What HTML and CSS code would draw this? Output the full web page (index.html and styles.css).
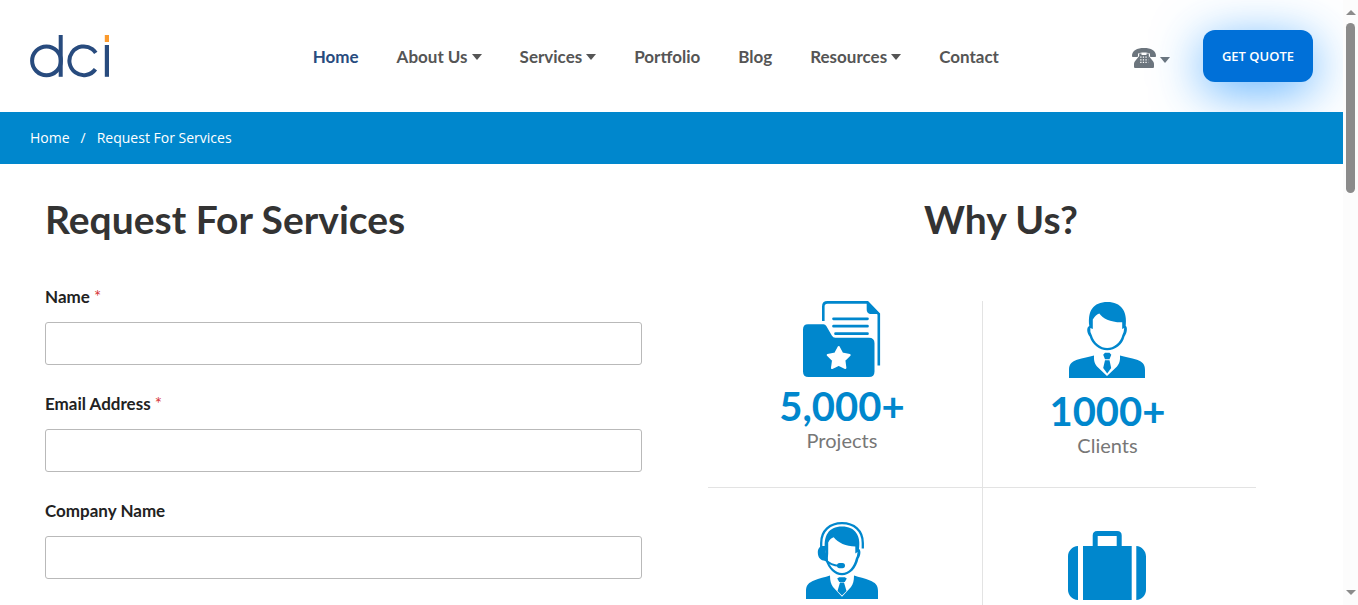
FILE: index.html
```html
<!DOCTYPE html>
<html lang="en">
<head>
<meta charset="utf-8">
<meta name="viewport" content="width=device-width, initial-scale=1">
<title>Request For Services</title>
<link rel="stylesheet" href="styles.css">
</head>
<body>
<div class="window">
<div class="page">
  <header class="header">
    <a class="logo" href="#" aria-label="dci">
      <svg width="80" height="44" viewBox="0 0 80 44" fill="none" stroke="#284b7e" stroke-width="4">
        <circle cx="16.5" cy="26.8" r="14.4"/>
        <rect x="28.7" y="1" width="4" height="41.8" fill="#284b7e" stroke="none"/>
        <circle cx="53.8" cy="26.8" r="14.4" stroke-dasharray="72.5 18" transform="rotate(36 53.8 26.8)"/>
        <rect x="74.8" y="11" width="4.2" height="31.8" fill="#284b7e" stroke="none"/>
        <rect x="74.8" y="1" width="4.2" height="7" fill="#fb9a2d" stroke="none"/>
      </svg>
    </a>
    <nav class="nav">
      <a class="nav-link active" href="#">Home</a>
      <a class="nav-link" href="#">About Us<span class="caret"></span></a>
      <a class="nav-link" href="#">Services<span class="caret"></span></a>
      <a class="nav-link" href="#">Portfolio</a>
      <a class="nav-link" href="#">Blog</a>
      <a class="nav-link" href="#">Resources<span class="caret"></span></a>
      <a class="nav-link" href="#">Contact</a>
    </nav>
    <div class="actions">
      <button class="phone" type="button" aria-label="Phone numbers">
        <svg width="24" height="20" viewBox="0 0 24 20">
          <path fill="#6c757d" d="M0 8C0 2.500 5 0 12 0S24 2.500 24 8c0 .8-.5 1-1.200 1h-3.600c-.8 0-1.200-.4-1.200-1V5.500C15 4 9 4 6 5.500V8c0 .6-.4 1-1.200 1H1.200C.5 9 0 8.800 0 8Z"/>
          <path fill="#6c757d" d="M7.200 5.500h2.300V7h5V5.500h2.300V8l4.400 5.500c.6.800.8 1.500.8 2.500v2.500c0 1-.5 1.500-1.500 1.500h-17C2.500 20 2 19.500 2 18.500V16c0-1 .2-1.700.8-2.500L7.200 8Z"/>
          <path stroke="#fff" stroke-width="1.300" stroke-dasharray="1.300 1.300" d="M8.200 9.200h8M8.200 11.800h8M8.200 14.400h8" />
        </svg>
        <span class="caret"></span>
      </button>
      <a class="quote" href="#">GET QUOTE</a>
    </div>
  </header>

  <nav class="crumbs" aria-label="Breadcrumb">
    <a href="#">Home</a><span>/</span><span>Request For Services</span>
  </nav>

  <main class="main">
    <section>
      <h1 class="title">Request For Services</h1>
      <form class="form">
        <div class="field">
          <label for="name">Name <span class="required">*</span></label>
          <input id="name" type="text">
        </div>
        <div class="field">
          <label for="email">Email Address <span class="required">*</span></label>
          <input id="email" type="email">
        </div>
        <div class="field">
          <label for="company">Company Name</label>
          <input id="company" type="text">
        </div>
      </form>
    </section>

    <section>
      <h2 class="title centered">Why Us?</h2>
      <div class="stats">
        <div class="stat projects">
          <svg width="78" height="76" viewBox="0 0 78 76" fill="#0087cd">
            <path fill="none" stroke="#0087cd" stroke-width="2.600" d="M20.300 20V5.500Q20.300 1.400 24.500 1.400H64.500L75.800 13V64.500"/>
            <path d="M63.700 1h1.500l11.800 12h-8.500c-3.500 0-4.800-1.500-4.800-5Z"/>
            <path stroke="#0087cd" stroke-width="2.700" stroke-linecap="round" d="M30.500 17.800h34M30.500 25.200h34M32.500 32.700h32"/>
            <path d="M5 23.200h15.500q1.800 0 2.800 1.700l5.500 9.600q1.300 2.200 3.500 2.200H66q5.500 0 5.500 5.500V70.500Q71.500 76 66 76H5.500Q0 76 0 70.500V28.500Q0 23.200 5 23.200Z"/>
            <path fill="#fff" stroke="#fff" stroke-width="2" stroke-linejoin="round" d="m35.700 46 3.500 6.500 7.500 1.500-5.300 5.300 1 7.700-6.700-3.200L29 67l1-7.700-5.300-5.300 7.500-1.500Z"/>
          </svg>
          <strong>5,000+</strong>
          <span>Projects</span>
        </div>
        <div class="stat clients">
          <svg width="76" height="76" viewBox="0 0 76 76" fill="#0087cd">
            <path d="M20.300 24C18.500 9 24 0 38.500 0 52 0 58.500 9 56.700 24c2 1 1.500 7-1.200 10.500-2 8.500-9.500 13.700-17.300 13.700S23 42.500 20.700 34.500C18 31.500 17 25.500 20.300 24Z"/>
            <path fill="#fff" d="M23.800 27V17.500q3-4.800 6.500-6C34 16.500 41 20.500 53.200 20.300V27l2-1q-.2 4.500-1.900 7.200C51.500 41 44.500 46 38.200 46S25 41 22.800 33.200Q20.800 30 21.300 26Z"/>
            <path d="M0 76V68c0-6 3-8.500 8-10.200C14 55.800 20 55 25 53.500c-.3 6 1 8.500 3 11L38 74l10-9.500c2-2.500 3.300-5 3-11 5 1.500 11 2.300 17 4.300 5 1.700 8 4.200 8 10.200V76Z"/>
            <path d="m36 50.800h4.500l1.800 2-1.800 4.500h-4.500L34.200 52.800ZM36 58.200h4.500L42.200 66 38.200 71.500 34.200 66Z"/>
          </svg>
          <strong>1000+</strong>
          <span>Clients</span>
        </div>
        <div class="stat support">
          <svg width="72" height="77" viewBox="0 0 72 77" fill="#0087cd">
            <path fill="none" stroke="#0087cd" stroke-width="2.300" d="M15.200 27V21C15.200 8.500 24 1.200 36 1.200S56.800 8.500 56.800 21v5.500"/>
            <path d="M19.200 29C17 14 22.500 4.500 36 4.500S55 14 53 27c2 1 2 6-.5 9.500-2 10-9 16.800-16.500 16.800S22.500 47 19.500 38Z"/>
            <path fill="#fff" d="M22.200 31.500V20.500q2-4.500 5.500-5.300C32 20.500 40 24.500 49.300 24.500V31.500l2.300-1.500q-.3 4-1.800 6.500C48 45 42.500 51 36 51S24.500 45.500 21.700 38Z"/>
            <path d="M17 24h2.500v6l2.500 8-3 .7c-4 0-7.200-3-7.200-8.200 0-4 2-6.500 5.200-6.500Z"/>
            <path fill="none" stroke="#0087cd" stroke-width="1.800" d="M19 37.500Q25 43.500 33 43.800"/>
            <rect x="31" y="41" width="8" height="5.200" rx="2.600"/>
            <path d="M0 77V69c0-6 3-8.500 8-10.500 5-2.200 11-3.200 16-5 0 5.500 1 8.500 3 11.500l9 9.800 9-9.800c2-3 3-6 3-11.500 5 1.800 11 2.800 16 5 5 2 8 4.500 8 10.500v8Z"/>
            <path d="M33.200 55.200h5.600l2 1.300-2 3.500h-5.600l-2-3.500ZM34 60.500h4L40.500 69 36 73.500 31.500 69Z"/>
          </svg>
        </div>
        <div class="stat business">
          <svg width="78" height="69" viewBox="0 0 78 69" fill="#0087cd">
            <path d="M10 15V69C4 68.500 0 64 0 59V25.500C0 20 4 15.500 10 15ZM15 15h48.700v54H15ZM68.300 15C74 15.500 78 20 78 25.500V59c0 5-4 9.500-9.700 10Z"/>
            <path fill="none" stroke="#0087cd" stroke-width="5" d="M27.200 16V4.500q0-2 2-2h20q2 0 2 2V16"/>
          </svg>
        </div>
      </div>
    </section>
  </main>
</div>
<div class="scrollbar" aria-hidden="true">
  <span class="arrow up"></span>
  <span class="thumb"></span>
  <span class="arrow down"></span>
</div>
</div>
</body>
</html>
```
FILE: styles.css
```css
* { box-sizing: border-box; }

body {
  margin: 0;
  background: #fff;
  color: #333;
  font-family: "Open Sans", "Noto Sans", sans-serif;
}

a { color: inherit; text-decoration: none; }
svg { display: block; flex: none; }

.window {
  display: flex;
  height: 100vh;
  overflow: hidden;
}

.page {
  flex: 1;
  min-width: 0;
  overflow: hidden;
}

.header {
  display: grid;
  grid-template-columns: 9fr auto 10fr;
  align-items: center;
  min-height: 112px;
  padding: 0 30px;
}

.nav {
  display: flex;
  align-items: center;
  gap: 38px;
  padding-top: 2px;
}

.nav-link {
  display: flex;
  align-items: center;
  gap: 4px;
  color: #555;
  font-family: Lato, sans-serif;
  font-size: 17px;
  font-weight: 700;
  line-height: 24px;
  white-space: nowrap;
}

.nav-link.active { color: #284b7e; }

.caret {
  border: 5px solid transparent;
  border-top: 6px solid currentColor;
  border-bottom: 0;
}

.actions {
  display: flex;
  align-items: center;
  justify-content: flex-end;
  gap: 33px;
}

.phone {
  display: flex;
  align-items: center;
  gap: 4px;
  padding: 4px 0 0;
  border: 0;
  background: none;
  color: #6c757d;
}

.phone .caret { margin-top: 4px; }

.quote {
  width: 110px;
  border-radius: 12px;
  background: #0070d8;
  box-shadow: 0 10px 50px #1f93ffb8;
  color: #fff;
  font-size: 13px;
  font-weight: 600;
  line-height: 52px;
  text-align: center;
}

.crumbs {
  position: relative;
  display: flex;
  align-items: center;
  gap: 11px;
  min-height: 52px;
  padding: 0 30px 2px;
  background: #0087cd;
  color: #fff;
  font-size: 14px;
}

.main {
  display: grid;
  grid-template-columns: 22fr 23fr;
  gap: 47px;
  padding: 30px 30px 0 45px;
}

.title {
  margin: 0;
  font-family: Lato, sans-serif;
  font-size: 39px;
  font-weight: 700;
  line-height: 50px;
}

.centered { text-align: center; }

.form {
  display: grid;
  gap: 28px;
  margin-top: 41px;
}

.field {
  display: grid;
  gap: 13px;
}

.field + .field { margin-top: -1px; }

.field label {
  color: #222;
  font-family: Lato, sans-serif;
  font-size: 17px;
  font-weight: 700;
  line-height: 24px;
}

.required { color: #d63637; font-weight: 400; }

.field input {
  width: 100%;
  height: 43px;
  padding: 0 12px;
  border: 1px solid #b9b9b9;
  border-radius: 3px;
  background: #fff;
  font: inherit;
}

.stats {
  display: grid;
  grid-template-columns: 1fr 1fr;
  margin: 57px 57px 0 19px;
}

.stat {
  display: flex;
  flex-direction: column;
  align-items: center;
  min-height: 187px;
  font-family: Lato, sans-serif;
}

.stat strong {
  color: #0087cd;
  font-size: 40px;
  line-height: 40px;
}

.stat span {
  color: #777;
  font-size: 20px;
  line-height: 28px;
}

.projects, .support { padding-right: 6px; }
.clients, .business { padding-right: 24px; border-left: 1px solid #e3e3e3; }
.projects, .clients { border-bottom: 1px solid #e3e3e3; }
.projects strong { margin-top: 9px; }
.clients { padding-top: 1px; }
.clients strong { margin-top: 13px; }
.support { padding-top: 34px; }
.business { padding-top: 43px; }

.scrollbar {
  display: flex;
  flex: none;
  flex-direction: column;
  align-items: center;
  width: 15px;
  padding: 10px 0;
  background: #fcfcfc;
}

.thumb {
  width: 9px;
  height: 170px;
  margin: 8px 0 auto;
  border-radius: 5px;
  background: #8b8b8b;
}

.arrow { border: 5px solid transparent; }
.up { border-top: 0; border-bottom-color: #8b8b8b; }
.down { border-bottom: 0; border-top-color: #8b8b8b; }
```
